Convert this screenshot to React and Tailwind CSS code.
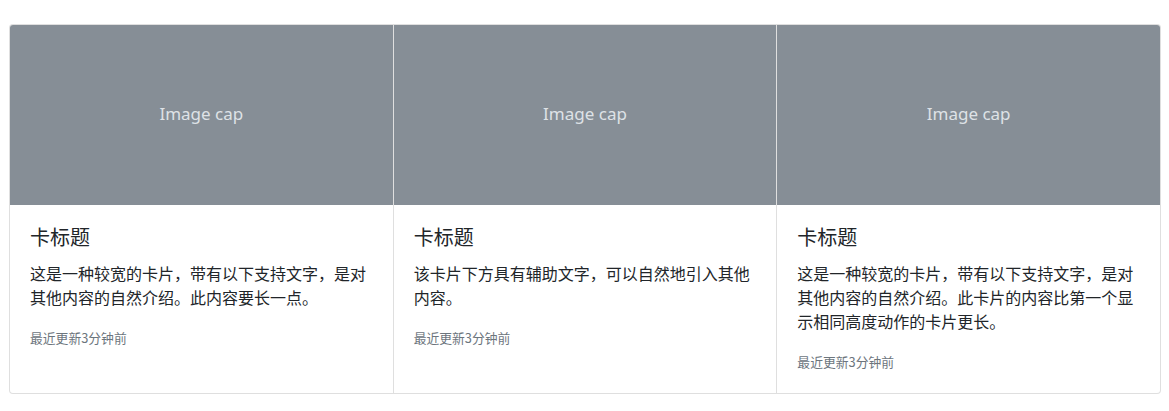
const cards = [
  {
    title: '卡标题',
    text: '这是一种较宽的卡片，带有以下支持文字，是对其他内容的自然介绍。此内容要长一点。',
  },
  {
    title: '卡标题',
    text: '该卡片下方具有辅助文字，可以自然地引入其他内容。',
  },
  {
    title: '卡标题',
    text: '这是一种较宽的卡片，带有以下支持文字，是对其他内容的自然介绍。此卡片的内容比第一个显示相同高度动作的卡片更长。',
  },
];

export default function App() {
  return (
    <div
      className="min-h-screen bg-white pl-[9px] pr-[8px] pt-[24px]"
      style={{ fontFamily: '"Noto Sans", "Noto Sans CJK SC", sans-serif' }}
    >
      <div className="flex">
        {cards.map((card, idx) => (
          <div
            key={idx}
            className={`flex flex-1 flex-col border border-[rgba(0,0,0,0.125)] bg-white ${
              idx === 0 ? 'rounded-l-[4px]' : 'border-l-0'
            } ${idx === cards.length - 1 ? 'rounded-r-[4px]' : ''}`}
          >
            {/* Image cap */}
            <div
              className={`flex h-[180px] items-center justify-center bg-[#868e96] pb-[3px] text-[17px] text-[#dee2e6] ${
                idx === 0 ? 'rounded-tl-[3px]' : ''
              } ${idx === cards.length - 1 ? 'rounded-tr-[3px]' : ''}`}
            >
              Image cap
            </div>
            {/* Body */}
            <div className="p-5 pb-[19px] text-[#212529]">
              <h5
                className="mb-3 text-[20px] font-normal leading-[24px]"
                style={{ fontFamily: '"Noto Sans CJK SC", sans-serif' }}
              >
                {card.title}
              </h5>
              <p
                className="mb-4 text-[16px] leading-[24px]"
                style={{ fontFamily: '"Noto Sans CJK SC", sans-serif' }}
              >
                {card.text}
              </p>
              <p className="text-[16px] leading-[24px]">
                <small
                  className="text-[12.8px] text-[#6c757d]"
                  style={{ fontFamily: '"Noto Sans CJK SC", sans-serif' }}
                >
                  最近更新3分钟前
                </small>
              </p>
            </div>
          </div>
        ))}
      </div>
    </div>
  );
}
